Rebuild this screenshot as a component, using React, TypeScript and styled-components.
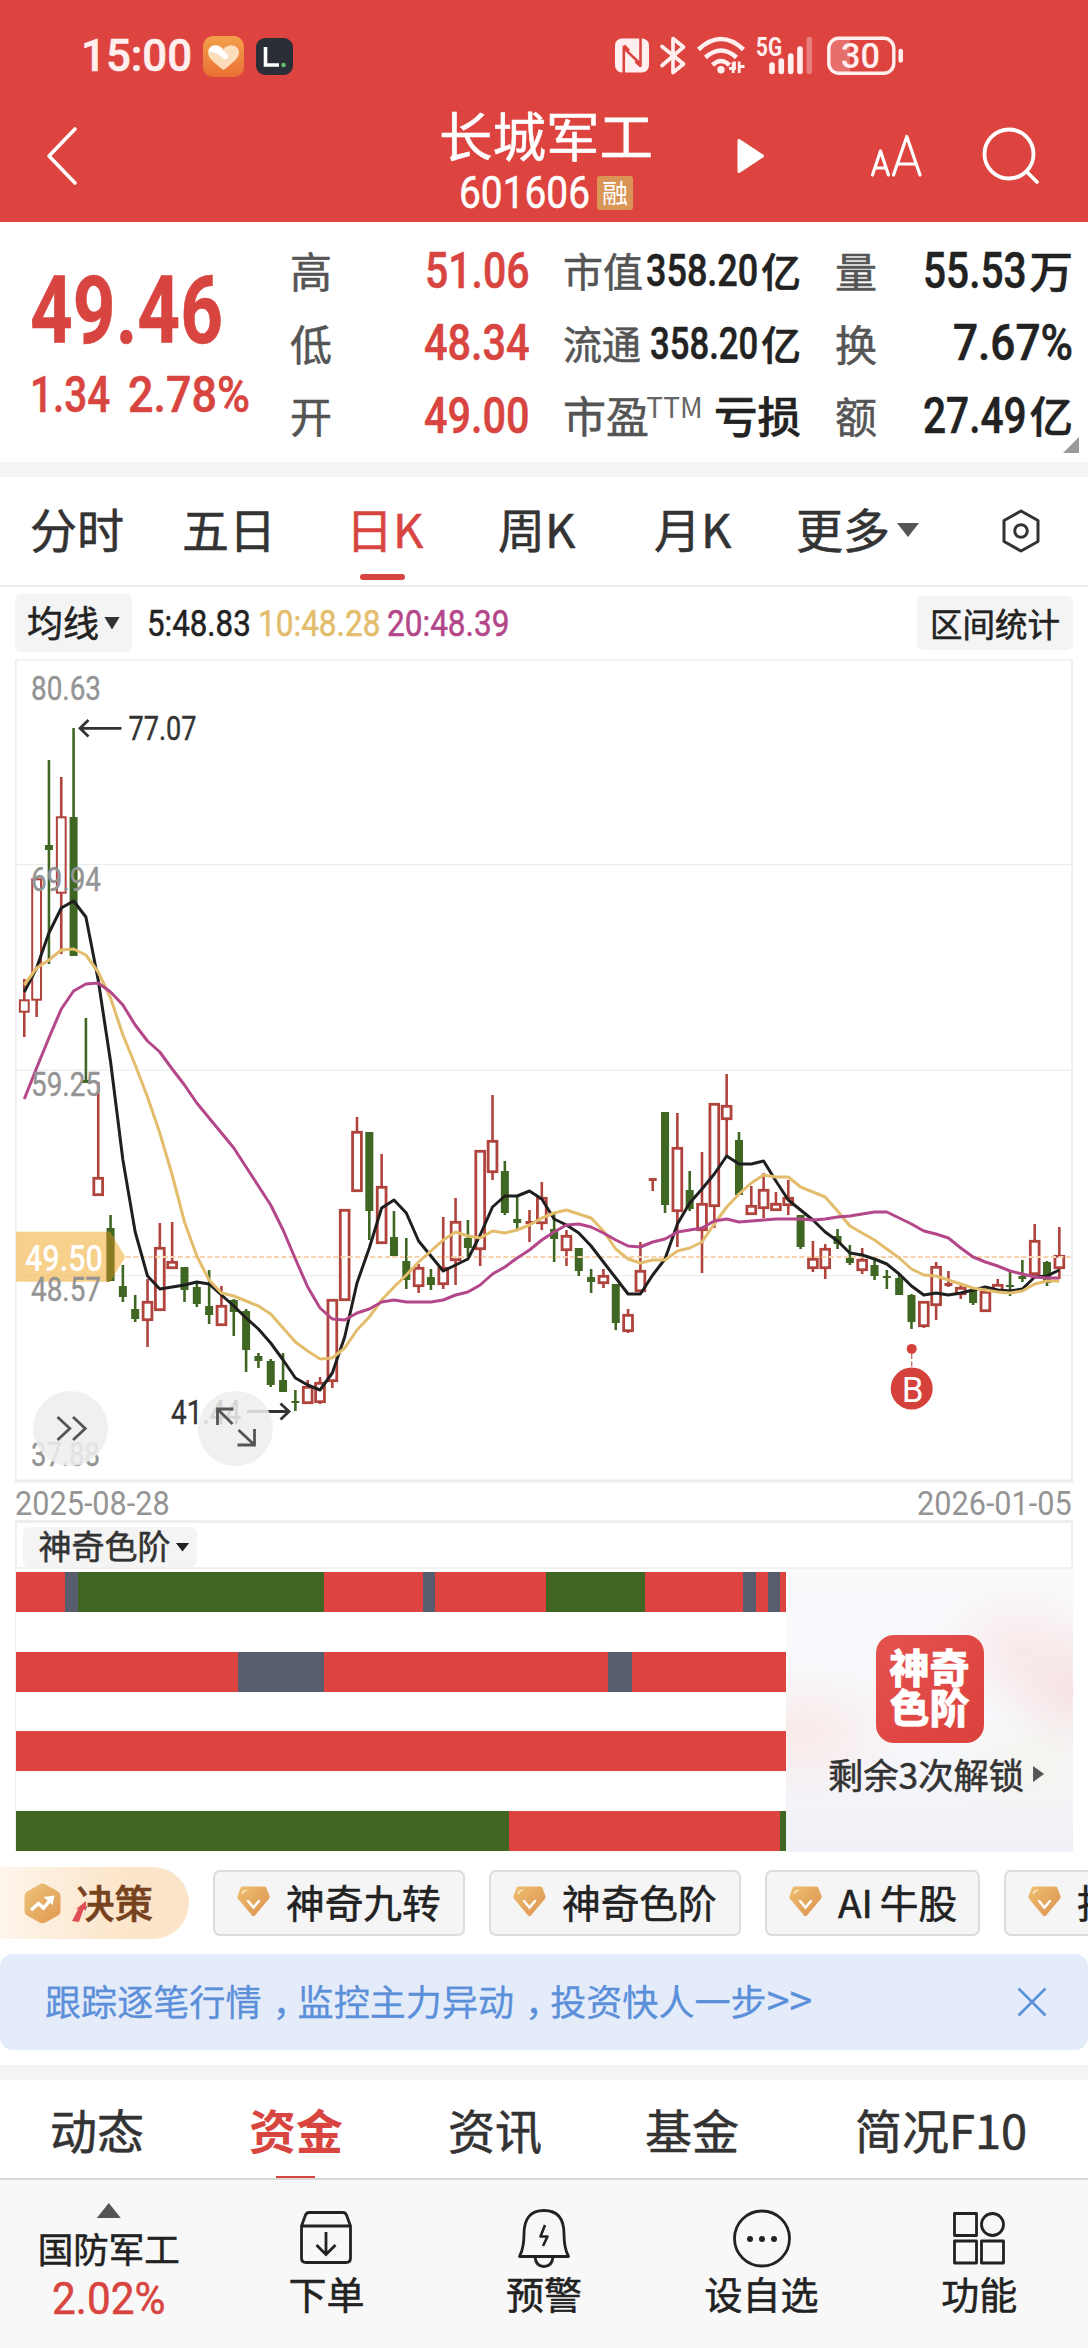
import React, { useLayoutEffect, useRef, useState } from 'react';
import styled, { createGlobalStyle, css } from 'styled-components';

const RED = '#DE443F';
const TEXT_RED = '#D84540';
const GREEN = '#3F6622';
const SLATE = '#575C6E';
const INK = '#222222';
const CJK = "'Noto Sans CJK SC', sans-serif";
const LATIN = "Roboto, 'Noto Sans CJK SC', sans-serif";

const GlobalStyle = createGlobalStyle`
  * { box-sizing: border-box; }
  body { margin: 0; background: #fff; font-family: ${CJK}; color: ${INK}; -webkit-text-stroke: 0.55px currentColor; }
  svg { display: block; flex: none; -webkit-text-stroke: 0; }
`;

/* ---------- condensed figures ---------- */

const FigureBox = styled.span<{ $w: number; $size: number; $color?: string; $weight?: number }>`
  display: inline-block;
  flex: none;
  width: ${(p) => p.$w}px;
  height: ${(p) => Math.round(p.$size * 1.1)}px;
  line-height: ${(p) => Math.round(p.$size * 1.1)}px;
  font-family: ${LATIN};
  font-size: ${(p) => p.$size}px;
  font-weight: ${(p) => p.$weight ?? 500};
  color: ${(p) => p.$color ?? INK};
  white-space: nowrap;
`;
const FigureText = styled.span`
  display: inline-block;
  transform-origin: 0 50%;
`;

type FigureProps = { text: string; width: number; size: number; color?: string; weight?: number };

function Figure({ text, width, size, color, weight }: FigureProps) {
  const ref = useRef<HTMLSpanElement>(null);
  const [scale, setScale] = useState(0.8);
  useLayoutEffect(() => {
    if (ref.current) setScale(width / ref.current.offsetWidth);
  }, [text, width, size]);
  return (
    <FigureBox $w={width} $size={size} $color={color} $weight={weight}>
      <FigureText ref={ref} style={{ transform: `scaleX(${scale})` }}>{text}</FigureText>
    </FigureBox>
  );
}

const Label = styled.span<{ $size: number; $color?: string; $weight?: number; $ml?: number }>`
  flex: none;
  font-size: ${(p) => p.$size}px;
  line-height: 1.2;
  color: ${(p) => p.$color ?? INK};
  font-weight: ${(p) => p.$weight ?? 400};
  margin-left: ${(p) => p.$ml ?? 0}px;
  padding-bottom: 2px;
  white-space: nowrap;
`;

const Gap = styled.i<{ $w: number }>`
  flex: none;
  width: ${(p) => p.$w}px;
`;

const Triangle = styled.i<{ $dir: 'up' | 'down' | 'right'; $w: number; $h: number; $color?: string }>`
  flex: none;
  width: ${(p) => p.$w}px;
  height: ${(p) => p.$h}px;
  background: ${(p) => p.$color ?? '#333'};
  clip-path: ${(p) =>
    p.$dir === 'up' ? 'polygon(50% 0, 100% 100%, 0 100%)'
    : p.$dir === 'down' ? 'polygon(0 0, 100% 0, 50% 100%)'
    : 'polygon(0 0, 100% 50%, 0 100%)'};
`;

/* ---------- header ---------- */

const Header = styled.header`
  height: 222px;
  background: ${RED};
  color: #fff;
`;
const StatusBar = styled.div`
  display: flex;
  align-items: center;
  height: 112px;
  padding-left: 81px;
`;
const NavBar = styled.div`
  display: flex;
  align-items: center;
  height: 88px;
`;
const TitleBlock = styled.div`
  display: flex;
  flex-direction: column;
  align-items: center;
  align-self: flex-start;
  width: 214px;
  height: 110px;
  margin-left: 361px;
`;
const Title = styled.h1`
  margin: 0;
  height: 58px;
  margin-top: -8px;
  font-size: 53.5px;
  line-height: 60px;
  font-weight: 400;
`;
const CodeRow = styled.div`
  display: flex;
  align-items: center;
  gap: 7px;
  margin-top: 7px;
  height: 48px;
`;
const MarginBadge = styled.span`
  width: 36px;
  height: 34px;
  border-radius: 3px;
  background: #DA9455;
  font-size: 26px;
  line-height: 32px;
  text-align: center;
  -webkit-text-stroke: 0;
`;

/* ---------- quote ---------- */

const Quote = styled.section`
  display: flex;
  position: relative;
  height: 240px;
`;
const PriceBlock = styled.div`
  width: 290px;
  padding: 38px 0 0 30px;
`;
const Changes = styled.div`
  display: flex;
  gap: 18px;
  margin-top: 5px;
`;
const StatColumn = styled.div<{ $w: number; $ml?: number }>`
  display: flex;
  flex-direction: column;
  width: ${(p) => p.$w}px;
  margin-left: ${(p) => p.$ml ?? 0}px;
  padding-top: 13px;
`;
const Stat = styled.div`
  display: flex;
  align-items: center;
  justify-content: space-between;
  height: 72.5px;
`;
const StatValue = styled.span`
  display: flex;
  align-items: center;
  gap: 3px;
`;
const TTM = styled.span`
  align-self: flex-start;
  margin: 9px 0 0 -14px;
  font: 400 28px/34px 'Noto Sans CJK SC', sans-serif;
  -webkit-text-stroke: 0;
  color: #666;
`;
const Corner = styled.i`
  position: absolute;
  right: 9px;
  bottom: 9px;
  width: 16px;
  height: 16px;
  background: #999;
  clip-path: polygon(100% 0, 100% 100%, 0 100%);
`;
const Strip = styled.div`
  height: 15px;
  background: #f4f4f4;
`;

/* ---------- period tabs ---------- */

const PeriodTabs = styled.nav`
  display: grid;
  grid-template-columns: 152px 164px 152px 156px 142px 206px 1fr;
  align-items: center;
  height: 110px;
  padding: 0 0 5px 30px;
  border-bottom: 2px solid #ececec;
`;
const Period = styled.span<{ $active?: boolean }>`
  position: relative;
  top: -1px;
  display: flex;
  align-items: center;
  font-size: 47px;
  line-height: 60px;
  color: ${(p) => (p.$active ? TEXT_RED : '#333')};
  ${(p) => p.$active && css`
    &::after {
      content: '';
      position: absolute;
      left: 14px;
      top: 76px;
      width: 45px;
      height: 6px;
      border-radius: 3px;
      background: ${TEXT_RED};
    }
  `}
`;
const MoreArrow = styled.span`
  display: flex;
  padding: 5px 0 0 7px;
`;

/* ---------- moving averages ---------- */

const AverageBar = styled.div`
  display: flex;
  align-items: center;
  height: 72px;
  padding: 0 15px;
`;
const SoftButton = styled.button<{ $w: number; $h: number }>`
  display: flex;
  align-items: center;
  justify-content: center;
  gap: 5px;
  width: ${(p) => p.$w}px;
  height: ${(p) => p.$h}px;
  padding: 0;
  border: 0;
  border-radius: 6px;
  background: #f4f4f4;
  font-family: ${CJK};
`;
const Push = styled.i`
  flex: 1;
`;

/* ---------- chart ---------- */

const ChartFrame = styled.div`
  height: 823px;
  padding-left: 15px;
`;
const DateRow = styled.div`
  display: flex;
  justify-content: space-between;
  align-items: center;
  height: 38px;
  padding: 4px 16px 0 15px;
  -webkit-text-stroke: 0;
`;

/* ---------- colour ladder ---------- */

const LadderHead = styled.div`
  height: 49px;
  margin: 0 15px;
  padding: 4px 0 0 6px;
  border: 2px solid #f1f1f1;
  border-top: 3px solid #eee;
`;
const LadderBody = styled.section`
  display: flex;
  height: 283px;
  margin: 0 15px;
  border-left: 1px solid #f1f1f1;
`;
const Ladder = styled.div`
  display: flex;
  flex-direction: column;
  justify-content: space-between;
  width: 770px;
  padding: 3px 0 1px;
`;
const Rung = styled.div`
  display: flex;
  height: 40px;
  overflow: hidden;
`;
const Step = styled.i<{ $n: number; $tone: string }>`
  flex: none;
  width: ${(p) => p.$n * 12.33}px;
  background: ${(p) => p.$tone};
`;
const Unlock = styled.aside`
  display: flex;
  flex-direction: column;
  align-items: center;
  flex: 1;
  padding-top: 66px;
  background:
    radial-gradient(ellipse 90px 70px at 82% 28%, rgba(248, 222, 222, 0.6), transparent),
    radial-gradient(ellipse 80px 70px at 100% 43%, rgba(246, 216, 216, 0.65), transparent),
    radial-gradient(ellipse 110px 70px at 6% 58%, rgba(249, 228, 226, 0.75), transparent),
    radial-gradient(ellipse 90px 60px at 85% 70%, rgba(243, 245, 236, 0.8), transparent),
    linear-gradient(#f9fafc, #f7f8fb 60%, #f0f0f7);
`;
const LadderIcon = styled.div`
  width: 108px;
  height: 108px;
  border-radius: 18px;
  background: linear-gradient(135deg, #E5524E, #DB403C);
  color: #fff;
  font-size: 40px;
  font-weight: 900;
  line-height: 39.5px;
  text-align: center;
  padding-top: 12px;
`;
const UnlockText = styled.div`
  display: flex;
  align-items: center;
  gap: 9px;
  margin: 11px 0 0 13px;
  font-size: 35.3px;
  line-height: 40px;
  color: #333;
`;

/* ---------- tool chips ---------- */

const ChipRow = styled.div`
  display: flex;
  align-items: center;
  gap: 24px;
  height: 102px;
  overflow: hidden;
`;
const Decision = styled.div`
  display: flex;
  align-items: center;
  flex: none;
  position: relative;
  width: 189px;
  height: 72px;
  padding-left: 24px;
  border-radius: 0 36px 36px 0;
  background: linear-gradient(90deg, #FEF5EB, #FCE6CC 60%, #FBE4C8);
`;
const DecisionText = styled.span`
  margin: -5px 0 0 15px;
  font-size: 38.5px;
  line-height: 48px;
  font-weight: 500;
  color: #77431f;
`;
const DecisionArrow = styled.svg`
  position: absolute;
  left: 72px;
  top: 33px;
`;
const Chip = styled.div<{ $w: number }>`
  display: flex;
  align-items: center;
  flex: none;
  width: ${(p) => p.$w}px;
  height: 66px;
  padding: 0 0 4px 22px;
  gap: 16px;
  border: 2px solid #dcdcdc;
  border-radius: 7px;
  background: #f5f5f5;
  font-size: 38.7px;
  line-height: 48px;
  white-space: nowrap;
  overflow: hidden;
`;
const ChipLatin = styled.span`
  margin: 0 -9px 0 0;
`;

/* ---------- banner ---------- */

const Banner = styled.div`
  display: flex;
  align-items: center;
  justify-content: space-between;
  height: 96px;
  margin-bottom: 15px;
  padding: 0 41px 0 45px;
  border-radius: 13px;
  background: #E4ECF9;
  color: #5B8FD9;
`;
const BannerText = styled.span`
  padding-bottom: 4px;
  font-size: 36.1px;
  line-height: 44px;
  white-space: nowrap;
  -webkit-text-stroke: 0.3px currentColor;
`;
const Comma = styled.span`
  display: inline-block;
  transform: translateX(11px);
`;
const Arrows = styled.span`
  font-size: 41px;
  line-height: 1;
`;

/* ---------- info tabs ---------- */

const InfoTabs = styled.nav`
  display: grid;
  grid-template-columns: 199px 199px 197px 210px 1fr;
  align-items: center;
  height: 98px;
  padding-left: 50px;
`;
const InfoTab = styled.span<{ $active?: boolean }>`
  position: relative;
  height: 98px;
  font-size: 47px;
  line-height: 97px;
  font-weight: ${(p) => (p.$active ? 700 : 400)};
  color: ${(p) => (p.$active ? TEXT_RED : '#333')};
  ${(p) => p.$active && css`
    -webkit-text-stroke: 0;
    &::after {
      content: '';
      position: absolute;
      left: 27px;
      bottom: 0;
      width: 39px;
      height: 2px;
      background: ${TEXT_RED};
    }
  `}
`;

/* ---------- bottom bar ---------- */

const BottomBar = styled.footer`
  display: grid;
  grid-template-columns: repeat(5, 1fr);
  height: 170px;
  border-top: 2px solid #d9d9d9;
  background: #f8f8f8;
`;
const BottomItem = styled.div`
  display: flex;
  flex-direction: column;
  align-items: center;
  padding-top: 28px;
`;
const BottomLabel = styled.span`
  margin-top: 2px;
  font-size: 38px;
  line-height: 46px;
`;
const IndexItem = styled(BottomItem)`
  padding-top: 23px;
`;
const IndexName = styled.span`
  margin: 7px 0 4px;
  font-size: 35.5px;
  line-height: 46px;
`;

/* ---------- data ---------- */

/* colour, high, body top, body bottom, low (chart units) */
type Candle = [0 | 1, number, number, number, number];
const candles: Candle[] = [
  [1, 979, 1000, 1012, 1037], [1, 879, 879, 1000, 1017], [0, 760, 845, 850, 964], [1, 777, 817, 893, 954],
  [0, 728, 817, 956, 956], [0, 1018, 1080, 1083, 1083], [1, 1082, 1178, 1195, 1195], [0, 1215, 1228, 1281, 1281],
  [0, 1265, 1286, 1297, 1302], [0, 1295, 1309, 1319, 1322], [1, 1279, 1302, 1320, 1347], [1, 1223, 1248, 1310, 1311],
  [1, 1222, 1262, 1268, 1268], [0, 1267, 1267, 1290, 1302], [0, 1283, 1287, 1304, 1307], [0, 1270, 1306, 1315, 1324],
  [1, 1286, 1306, 1325, 1325], [0, 1299, 1300, 1312, 1336], [0, 1309, 1311, 1350, 1372], [0, 1353, 1356, 1361, 1368],
  [0, 1359, 1361, 1385, 1387], [0, 1353, 1380, 1392, 1392], [0, 1390, 1401, 1403, 1411], [1, 1380, 1387, 1403, 1403],
  [1, 1377, 1383, 1402, 1404], [1, 1300, 1300, 1381, 1388], [1, 1210, 1210, 1300, 1300], [1, 1117, 1132, 1191, 1191],
  [0, 1132, 1132, 1211, 1240], [1, 1154, 1187, 1243, 1243], [0, 1211, 1237, 1256, 1257], [0, 1238, 1261, 1280, 1289],
  [1, 1264, 1268, 1286, 1293], [0, 1269, 1277, 1285, 1290], [1, 1217, 1268, 1284, 1289], [1, 1198, 1222, 1260, 1285],
  [0, 1220, 1238, 1248, 1257], [1, 1151, 1151, 1249, 1266], [1, 1095, 1141, 1172, 1180], [0, 1161, 1171, 1213, 1215],
  [0, 1195, 1219, 1223, 1229], [1, 1210, 1221, 1224, 1242], [1, 1182, 1198, 1223, 1230], [0, 1212, 1229, 1239, 1262],
  [1, 1230, 1236, 1250, 1266], [0, 1248, 1248, 1271, 1276], [0, 1269, 1277, 1282, 1293], [1, 1269, 1276, 1283, 1288],
  [0, 1284, 1284, 1323, 1330], [1, 1309, 1315, 1331, 1333], [1, 1242, 1271, 1291, 1292], [1, 1178, 1178, 1181, 1191],
  [0, 1112, 1112, 1205, 1213], [1, 1113, 1148, 1211, 1247], [0, 1171, 1190, 1209, 1211], [1, 1152, 1204, 1230, 1273],
  [1, 1104, 1104, 1206, 1228], [1, 1074, 1106, 1119, 1156], [0, 1132, 1140, 1195, 1195], [1, 1186, 1206, 1214, 1214],
  [1, 1173, 1190, 1208, 1218], [1, 1192, 1204, 1210, 1211], [1, 1180, 1198, 1205, 1215], [0, 1215, 1215, 1247, 1249],
  [1, 1241, 1259, 1268, 1272], [1, 1244, 1249, 1268, 1279], [0, 1229, 1236, 1244, 1249], [0, 1245, 1257, 1263, 1265],
  [1, 1248, 1260, 1270, 1274], [0, 1260, 1265, 1276, 1280], [0, 1270, 1276, 1278, 1289], [0, 1273, 1278, 1295, 1295],
  [0, 1294, 1295, 1322, 1329], [1, 1302, 1302, 1326, 1328], [1, 1262, 1267, 1305, 1320], [1, 1271, 1283, 1286, 1287],
  [1, 1285, 1288, 1294, 1299], [0, 1290, 1290, 1303, 1305], [1, 1292, 1292, 1311, 1311], [1, 1279, 1285, 1291, 1291],
  [0, 1271, 1285, 1287, 1296], [0, 1260, 1276, 1279, 1282], [1, 1224, 1241, 1274, 1274], [0, 1261, 1262, 1283, 1286],
  [1, 1227, 1256, 1268, 1279],
];
const ma5 = [992, 968, 933, 908, 901, 917, 980, 1062, 1160, 1232, 1276, 1289, 1287, 1285, 1282, 1284, 1295, 1306, 1318, 1329, 1343, 1360, 1378, 1385, 1390, 1373, 1337, 1283, 1248, 1208, 1200, 1213, 1241, 1256, 1271, 1265, 1259, 1235, 1207, 1196, 1196, 1191, 1199, 1219, 1225, 1233, 1246, 1262, 1278, 1294, 1294, 1275, 1259, 1224, 1203, 1189, 1174, 1156, 1164, 1164, 1161, 1181, 1200, 1210, 1220, 1232, 1241, 1253, 1255, 1259, 1264, 1274, 1286, 1295, 1293, 1295, 1293, 1290, 1287, 1290, 1291, 1289, 1277, 1276, 1270];
const ma10 = [985, 968, 960, 950, 949, 955, 972, 998, 1035, 1065, 1097, 1133, 1175, 1222, 1256, 1280, 1293, 1296, 1301, 1306, 1314, 1328, 1342, 1351, 1359, 1358, 1348, 1330, 1317, 1300, 1287, 1275, 1262, 1251, 1240, 1232, 1236, 1238, 1231, 1233, 1230, 1225, 1218, 1213, 1210, 1214, 1218, 1231, 1249, 1259, 1263, 1260, 1260, 1251, 1248, 1242, 1224, 1207, 1194, 1183, 1175, 1177, 1177, 1187, 1192, 1197, 1211, 1226, 1233, 1240, 1249, 1258, 1269, 1275, 1276, 1280, 1284, 1288, 1290, 1292, 1293, 1291, 1284, 1281, 1281];
const ma20 = [1099, 1068, 1038, 1009, 991, 984, 983, 992, 1005, 1025, 1041, 1052, 1069, 1085, 1103, 1118, 1133, 1148, 1167, 1186, 1205, 1230, 1259, 1287, 1308, 1319, 1320, 1313, 1309, 1302, 1300, 1302, 1302, 1302, 1300, 1295, 1292, 1285, 1274, 1267, 1258, 1250, 1240, 1232, 1225, 1224, 1227, 1233, 1240, 1246, 1247, 1242, 1239, 1232, 1230, 1228, 1221, 1219, 1222, 1221, 1220, 1219, 1219, 1219, 1220, 1219, 1217, 1216, 1214, 1212, 1212, 1218, 1224, 1231, 1234, 1238, 1248, 1257, 1262, 1266, 1271, 1274, 1277, 1278, 1278];

const xAt = (i: number) => 24.3 + i * 12.322;
const toPoints = (ys: number[]) => ys.map((y, i) => `${xAt(i).toFixed(1)},${y}`).join(' ');

const ladder: [number, string][][] = [
  [[4, RED], [1, SLATE], [20, GREEN], [8, RED], [1, SLATE], [9, RED], [8, GREEN], [8, RED], [1, SLATE], [1, RED], [1, SLATE], [0.5, RED]],
  [[18, RED], [7, SLATE], [23, RED], [2, SLATE], [12.5, RED]],
  [[62.5, RED]],
  [[40, GREEN], [22, RED], [0.5, GREEN]],
];

/* ---------- chart drawing ---------- */

const AxisText = ({ x, y, w, children, fill = '#949494' }: { x: number; y: number; w: number; children: string; fill?: string }) => (
  <text x={x} y={y} fontFamily="Roboto" fontSize={33.5} fill={fill} stroke={fill} strokeWidth={0.4} textLength={w} lengthAdjust="spacingAndGlyphs">{children}</text>
);

function CandleMark({ c, i }: { c: Candle; i: number }) {
  const [up, high, top, bottom, low] = c;
  const x = xAt(i);
  const color = up ? '#B0433C' : GREEN;
  const hollow = up && bottom - top > 4;
  return (
    <g stroke={color} strokeWidth={2.8}>
      {high < top && <line x1={x} x2={x} y1={high} y2={top} strokeWidth={2.6} />}
      {low > bottom && <line x1={x} x2={x} y1={bottom} y2={low} strokeWidth={2.6} />}
      {hollow
        ? <rect x={x - 4.4} y={top + 0.3} width={8.8} height={bottom - top - 0.6} fill={i < 5 ? 'none' : '#fff'} strokeWidth={i < 5 ? 2 : 2.8} />
        : <rect x={x - 4} y={top} width={8} height={bottom - top} fill={color} stroke="none" />}
    </g>
  );
}

function KLineChart() {
  return (
    <svg width="1059" height="824" viewBox="15 659 1059 824">
      <g stroke="#ededed" strokeWidth="1.6" fill="none">
        <path d="M15.8 1481V660H1072V1481" />
        <path d="M16 864.7H1072M16 1070.2H1072M16 1275.6H1072" strokeWidth="1.2" />
        <path d="M15 1481H1073" strokeWidth="3" />
      </g>
      {candles.map((c, i) => <CandleMark key={i} c={c} i={i} />)}
      <path d="M126 1257H1072" stroke="#F6D3AC" strokeWidth="1.8" strokeDasharray="5 2.4" />
      <g fill="none" strokeWidth="3" strokeLinejoin="round">
        <polyline points={toPoints(ma5)} stroke="#1f1f1f" />
        <polyline points={toPoints(ma10)} stroke="#E3BD6C" />
        <polyline points={toPoints(ma20)} stroke="#B3478A" />
      </g>
      <path d="M16 1231.8H110L125.500 1257L110 1281.800H16Z" fill="#F4BE60" fillOpacity="0.72" />
      <path d="M106.500 1231.800H110L114.500 1239V1274.500L110 1281.800H106.500Z" fill="#8A7B22" />
      <text x="25" y="1270.500" fontFamily="Roboto" fontSize="36" fontWeight="500" fill="#fff" textLength="78" lengthAdjust="spacingAndGlyphs">49.50</text>
      <AxisText x={31} y={700} w={70}>80.63</AxisText>
      <AxisText x={31} y={890.5} w={70}>69.94</AxisText>
      <AxisText x={31} y={1095.500} w={70}>59.25</AxisText>
      <AxisText x={31} y={1300.500} w={70}>48.57</AxisText>
      <AxisText x={31} y={1465.500} w={69}>37.88</AxisText>
      <AxisText x={128.500} y={740} w={68} fill="#333">77.07</AxisText>
      <AxisText x={171} y={1424} w={70} fill="#333">41.44</AxisText>
      <g fill="none" stroke="#333" strokeWidth="2.8">
        <path d="M121.500 728.300H80M88.500 720L80 728.300L88.500 736.600" />
        <path d="M247 1411.500H289M280.500 1403.500L289 1411.500L280.500 1419.500" />
      </g>
      <g fill="#eeeeee" fillOpacity="0.87">
        <circle cx="70.500" cy="1428.500" r="37.500" />
        <circle cx="235.500" cy="1428.500" r="37.500" />
      </g>
      <g fill="none" stroke="#555" strokeWidth="2.800">
        <path d="M57.500 1417L69.800 1428.500L57.500 1440M73 1417L85.300 1428.500L73 1440" />
        <path d="M217.500 1425V1409H233.500M217.500 1409L232.500 1424M254.500 1429V1445H237.500M254.500 1445L238.500 1430" />
      </g>
      <path d="M911.700 1354V1367" stroke="#C07070" strokeWidth="1.400" strokeDasharray="5 2.500" />
      <circle cx="911.700" cy="1348.900" r="5" fill="#D5413B" />
      <circle cx="911.700" cy="1388.500" r="21" fill="#D5413B" />
      <text x="912.700" y="1401.500" fontFamily="Roboto" fontSize="35" fill="#fff" textAnchor="middle">B</text>
    </svg>
  );
}

/* ---------- icons ---------- */

const HeartApp = () => (
  <svg width="41" height="41" viewBox="0 0 41 41">
    <defs><linearGradient id="heartBg" x2="0" y2="1"><stop stopColor="#F3A04C" /><stop offset="1" stopColor="#EA7033" /></linearGradient></defs>
    <rect width="41" height="41" rx="10" fill="url(#heartBg)" />
    <path d="M20.500 34C10 26 5 21.500 5 16.500C5 9 15.500 6.500 20.500 13C25.500 6.500 36 9 36 16.500C36 21.500 31 26 20.500 34Z" fill="#FCDDBB" />
    <path d="M6 15C6 10 12 8 16.500 11L24 18C27 21 23 25 20 22.500L15 18Z" fill="#fff" />
  </svg>
);
const LetterApp = () => (
  <svg width="37" height="37" viewBox="0 0 37 37">
    <rect width="37" height="37" rx="9" fill="#2B2E36" />
    <path d="M9.500 9V27H23" fill="none" stroke="#fff" strokeWidth="3.600" />
    <circle cx="27.500" cy="27" r="2.200" fill="#6CC070" />
  </svg>
);
const StatusIcons = () => (
  <svg width="292" height="44" viewBox="613 34 292 44" fill="none" stroke="#FFEFEF">
    <rect x="615" y="38.500" width="34" height="34" rx="7" fill="#FFEFEF" stroke="none" />
    <path d="M623.800 73V48L640.500 64V38M624 45.500L629 50.500M641 66.500L635.500 61.500" stroke={RED} strokeWidth="2.600" />
    <path d="M662 46.500L683.500 64L673 72.500V38.500L683.500 47L662 65.500" strokeWidth="3.700" strokeLinejoin="round" strokeLinecap="round" />
    <g strokeWidth="4.500">
      <path d="M698.500 49.500Q721 28.500 743.500 49.500M705.500 57.500Q721 43.500 736.500 57.500M712.500 65Q721 57 729.500 65" />
    </g>
    <circle cx="721" cy="69.800" r="3.700" fill="#FFEFEF" stroke="none" />
    <path d="M729 68.500H734.500V61.500M733.200 62V73M739.200 61.500V73M738 66.500H744.500" strokeWidth="2.800" />
    <text x="756" y="55.500" fontFamily="Roboto" fontSize="25" fontWeight="700" fill="#FFEFEF" stroke="none" textLength="26" lengthAdjust="spacingAndGlyphs">5G</text>
    <path d="M772 65V71.500M781.300 61V71.500M790.700 56V71.500M800 49V71.500" strokeWidth="5.600" strokeLinecap="round" />
    <path d="M809.300 39.500V71.500" strokeWidth="5.600" strokeLinecap="round" strokeOpacity="0.35" />
    <path d="M839 39H850V72.500H839Q830 72.500 830 64V47Q830 39 839 39Z" fill="#FFEFEF" fillOpacity="0.25" stroke="none" />
    <rect x="828.800" y="38.300" width="65" height="35" rx="10" strokeWidth="3.400" />
    <path d="M900.700 51V60.500" strokeWidth="4.500" strokeLinecap="round" />
    <text x="841" y="68" fontFamily="Roboto" fontSize="35.500" fontWeight="500" fill="#FFEFEF" stroke="none" textLength="39" lengthAdjust="spacingAndGlyphs">30</text>
  </svg>
);
const BackIcon = () => (
  <svg width="32" height="60" viewBox="0 0 32 60"><path d="M29 3L3 30L29 57" fill="none" stroke="#fff" strokeWidth="3.600" strokeLinecap="round" strokeLinejoin="round" /></svg>
);
const PlayIcon = () => (
  <svg width="30" height="38" viewBox="0 0 30 38"><path d="M3 3.500L26.500 19L3 34.500Z" fill="#fff" stroke="#fff" strokeWidth="3" strokeLinejoin="round" /></svg>
);
const FontSizeIcon = () => (
  <svg width="54" height="44" viewBox="0 0 54 44" fill="none" stroke="#fff" strokeWidth="3.200" strokeLinejoin="round" strokeLinecap="round">
    <path d="M2.500 41L10.500 17L18.500 41M5 34H16M23.500 41L36.800 2.500L50 41M28 30H46" />
  </svg>
);
const SearchIcon = () => (
  <svg width="60" height="60" viewBox="0 0 60 60" fill="none" stroke="#fff" strokeWidth="3.800" strokeLinecap="round">
    <circle cx="28" cy="28" r="24.500" /><path d="M45.500 45.500L56 56" />
  </svg>
);
const SettingsIcon = () => (
  <svg width="38" height="48" viewBox="0 -4 38 48" fill="none" stroke="#333" strokeWidth="3">
    <path d="M19 2L36 11.500V32.500L19 42L2 32.500V11.500Z" strokeLinejoin="round" /><circle cx="19" cy="22" r="6.300" />
  </svg>
);
const TrendIcon = () => (
  <svg width="37" height="41" viewBox="0 0 37 41">
    <defs><linearGradient id="hex" x2="1" y2="1"><stop stopColor="#EBC27B" /><stop offset="1" stopColor="#E29950" /></linearGradient></defs>
    <path d="M18.500 0.500Q20 0.500 22 1.700L34 8.500Q36.500 10 36.500 13V28Q36.500 31 34 32.500L22 39.300Q18.500 41.200 15 39.300L3 32.500Q0.500 31 0.500 28V13Q0.500 10 3 8.500L15 1.700Q17 0.500 18.500 0.500Z" fill="url(#hex)" />
    <path d="M7 27L14.500 20.500L19.500 25L26 17.500" fill="none" stroke="#fff" strokeWidth="3.400" />
    <path d="M19.500 14L30.500 12.500L28.500 22Z" fill="#fff" />
  </svg>
);
const GemIcon = () => (
  <svg width="33" height="31" viewBox="0 0 33 31">
    <defs><linearGradient id="gem" x2="1" y2="1"><stop stopColor="#EEC06F" /><stop offset="1" stopColor="#DC9050" /></linearGradient></defs>
    <path d="M6 0.500H27Q28.500 0.500 29.200 1.600L32.500 10Q33 11.500 32 12.800L18 29.500Q16.500 31 15 29.500L1 12.800Q0 11.500 0.500 10L3.800 1.600Q4.500 0.500 6 0.500Z" fill="url(#gem)" />
    <path d="M11 15L16.500 21.500L22 15" fill="none" stroke="#fff" strokeWidth="2.500" strokeLinecap="round" />
    <path d="M5.500 7.500Q6 4.500 9.500 4.200" fill="none" stroke="#FBE8C4" strokeWidth="1.600" strokeLinecap="round" />
  </svg>
);
const CloseIcon = () => (
  <svg width="30" height="30" viewBox="0 0 30 30"><path d="M1.500 1.500L28.500 28.500M28.500 1.500L1.500 28.500" stroke="#5B8FD9" strokeWidth="2.600" /></svg>
);
const OrderIcon = () => (
  <svg width="56" height="60" viewBox="0 0 56 60" fill="none" stroke={INK} strokeWidth="2.800">
    <path d="M3.500 18L7.500 7Q8.500 4.500 11 4.500H45Q47.500 4.500 48.500 7L52.500 18V50Q52.500 54.500 48 54.500H8Q3.500 54.500 3.500 50ZM3.500 18H52.500" strokeLinejoin="round" />
    <path d="M28 24V46M18.500 37L28 46.500L37.500 37" />
  </svg>
);
const BellIcon = () => (
  <svg width="56" height="60" viewBox="0 0 56 60" fill="none" stroke={INK} strokeWidth="2.800" strokeLinejoin="round">
    <path d="M8 26Q8 2.500 28 2.500Q48 2.500 48 26Q48 40 52.500 48.500H3.500Q8 40 8 26ZM19 49Q20 58.500 28 58.500Q36 58.500 37 49" />
    <path d="M29 17L24.500 28.500H31.500L27 38" strokeWidth="2.600" />
  </svg>
);
const MoreIcon = () => (
  <svg width="60" height="60" viewBox="0 0 60 60" fill="none" stroke={INK} strokeWidth="2.800">
    <circle cx="30" cy="30.500" r="27.500" />
    <g fill={INK} stroke="none"><circle cx="18" cy="31" r="3" /><circle cx="30" cy="31" r="3" /><circle cx="42" cy="31" r="3" /></g>
  </svg>
);
const GridIcon = () => (
  <svg width="56" height="60" viewBox="0 0 56 60" fill="none" stroke={INK} strokeWidth="2.800">
    <path d="M3.500 5.500H25.500V27.500H3.500ZM3.500 33H25.500V55H3.500ZM30.500 33H52.500V55H30.500Z" strokeLinejoin="round" />
    <circle cx="41.500" cy="16.500" r="11" />
  </svg>
);

/* ---------- page ---------- */

export default function App() {
  return (
    <>
      <GlobalStyle />
      <Header>
        <StatusBar>
          <Figure text="15:00" width={111} size={45} color="#FFEFEF" />
          <Gap $w={11} />
          <HeartApp />
          <Gap $w={12} />
          <LetterApp />
          <Gap $w={320} />
          <StatusIcons />
        </StatusBar>
        <NavBar>
          <Gap $w={46} /><BackIcon />
          <TitleBlock>
            <Title>长城军工</Title>
            <CodeRow>
              <Figure text="601606" width={131} size={44.5} color="#fff" weight={400} />
              <MarginBadge>融</MarginBadge>
            </CodeRow>
          </TitleBlock>
          <Gap $w={83} /><PlayIcon />
          <Gap $w={104} /><FontSizeIcon />
          <Gap $w={57} /><SearchIcon />
        </NavBar>
      </Header>

      <Quote>
        <PriceBlock>
          <Figure text="49.46" width={193} size={94} color={TEXT_RED} weight={700} />
          <Changes>
            <Figure text="1.34" width={80} size={50} color={TEXT_RED} />
            <Figure text="2.78%" width={122} size={50} color={TEXT_RED} />
          </Changes>
        </PriceBlock>
        <StatColumn $w={240}>
          <Stat><Label $size={42} $color="#555">高</Label><Figure text="51.06" width={105} size={50} color={TEXT_RED} /></Stat>
          <Stat><Label $size={42} $color="#555">低</Label><Figure text="48.34" width={106} size={50} color={TEXT_RED} /></Stat>
          <Stat><Label $size={42} $color="#555">开</Label><Figure text="49.00" width={106} size={50} color={TEXT_RED} /></Stat>
        </StatColumn>
        <StatColumn $w={238} $ml={33}>
          <Stat><Label $size={40} $color="#555">市值</Label><StatValue><Figure text="358.20" width={112} size={44} /><Label $size={40} $weight={500}>亿</Label></StatValue></Stat>
          <Stat><Label $size={39} $color="#555">流通</Label><StatValue><Figure text="358.20" width={108} size={44} /><Label $size={40} $weight={500}>亿</Label></StatValue></Stat>
          <Stat><Label $size={43} $color="#555">市盈</Label><TTM>TTM</TTM><Label $size={43.5} $weight={500}>亏损</Label></Stat>
        </StatColumn>
        <StatColumn $w={238} $ml={34}>
          <Stat><Label $size={42} $color="#555">量</Label><StatValue><Figure text="55.53" width={104} size={50} /><Label $size={43.5} $weight={500}>万</Label></StatValue></Stat>
          <Stat><Label $size={42} $color="#555">换</Label><StatValue><Figure text="7.67%" width={120} size={50} /></StatValue></Stat>
          <Stat><Label $size={42} $color="#555">额</Label><StatValue><Figure text="27.49" width={104} size={50} /><Label $size={43.5} $weight={500}>亿</Label></StatValue></Stat>
        </StatColumn>
        <Corner />
      </Quote>
      <Strip />

      <PeriodTabs>
        <Period>分时</Period>
        <Period>五日</Period>
        <Period $active>日K</Period>
        <Period>周K</Period>
        <Period>月K</Period>
        <Period>更多<MoreArrow><Triangle $dir="down" $w={22} $h={14} $color="#555" /></MoreArrow></Period>
        <SettingsIcon />
      </PeriodTabs>

      <AverageBar>
        <SoftButton $w={117} $h={58}><Label $size={36}>均线</Label><Triangle $dir="down" $w={16} $h={13} /></SoftButton>
        <Gap $w={15} />
        <Figure text="5:48.83" width={104} size={37} weight={400} />
        <Gap $w={7} />
        <Figure text="10:48.28" width={122} size={37} weight={400} color="#E3BD6C" />
        <Gap $w={7} />
        <Figure text="20:48.39" width={122} size={37} weight={400} color="#B3478A" />
        <Push />
        <SoftButton $w={156} $h={54}><Label $size={32.5}>区间统计</Label></SoftButton>
      </AverageBar>

      <ChartFrame><KLineChart /></ChartFrame>
      <DateRow>
        <Figure text="2025-08-28" width={155} size={34} weight={400} color="#949494" />
        <Figure text="2026-01-05" width={155} size={34} weight={400} color="#949494" />
      </DateRow>

      <LadderHead>
        <SoftButton $w={174} $h={40}><Label $size={33} $color="#333" $ml={8}>神奇色阶</Label><Triangle $dir="down" $w={14} $h={9} $color="#222" /></SoftButton>
      </LadderHead>
      <LadderBody>
        <Ladder>
          {ladder.map((row, i) => (
            <Rung key={i}>{row.map(([n, tone], j) => <Step key={j} $n={n} $tone={tone} />)}</Rung>
          ))}
        </Ladder>
        <Unlock>
          <LadderIcon>神奇<br />色阶</LadderIcon>
          <UnlockText>剩余3次解锁<Triangle $dir="right" $w={11} $h={16} $color="#555" /></UnlockText>
        </Unlock>
      </LadderBody>

      <ChipRow>
        <Decision>
          <TrendIcon />
          <DecisionText>决策</DecisionText>
          <DecisionArrow width="16" height="24" viewBox="0 0 16 24">
            <path d="M3 2H14V9L9 22H1V8Z" fill="#FCE9D3" />
            <path d="M0 21L6.500 8.500L3.500 9.500L14 1V10.500L11.500 9.500L7 22Z" fill="#DD4F55" />
          </DecisionArrow>
        </Decision>
        <Chip $w={252}><GemIcon />神奇九转</Chip>
        <Chip $w={252}><GemIcon />神奇色阶</Chip>
        <Chip $w={215}><GemIcon /><ChipLatin>AI</ChipLatin>牛股</Chip>
        <Chip $w={252}><GemIcon />抄底</Chip>
      </ChipRow>

      <Banner>
        <BannerText>跟踪逐笔行情<Comma>，</Comma>监控主力异动<Comma>，</Comma>投资快人一步<Arrows>&gt;&gt;</Arrows></BannerText>
        <CloseIcon />
      </Banner>
      <Strip />

      <InfoTabs>
        <InfoTab>动态</InfoTab>
        <InfoTab $active>资金</InfoTab>
        <InfoTab>资讯</InfoTab>
        <InfoTab>基金</InfoTab>
        <InfoTab>简况F10</InfoTab>
      </InfoTabs>

      <BottomBar>
        <IndexItem>
          <Triangle $dir="up" $w={24} $h={15} $color="#555" />
          <IndexName>国防军工</IndexName>
          <Figure text="2.02%" width={113} size={44.5} weight={400} color={TEXT_RED} />
        </IndexItem>
        <BottomItem><OrderIcon /><BottomLabel>下单</BottomLabel></BottomItem>
        <BottomItem><BellIcon /><BottomLabel>预警</BottomLabel></BottomItem>
        <BottomItem><MoreIcon /><BottomLabel>设自选</BottomLabel></BottomItem>
        <BottomItem><GridIcon /><BottomLabel>功能</BottomLabel></BottomItem>
      </BottomBar>
    </>
  );
}
